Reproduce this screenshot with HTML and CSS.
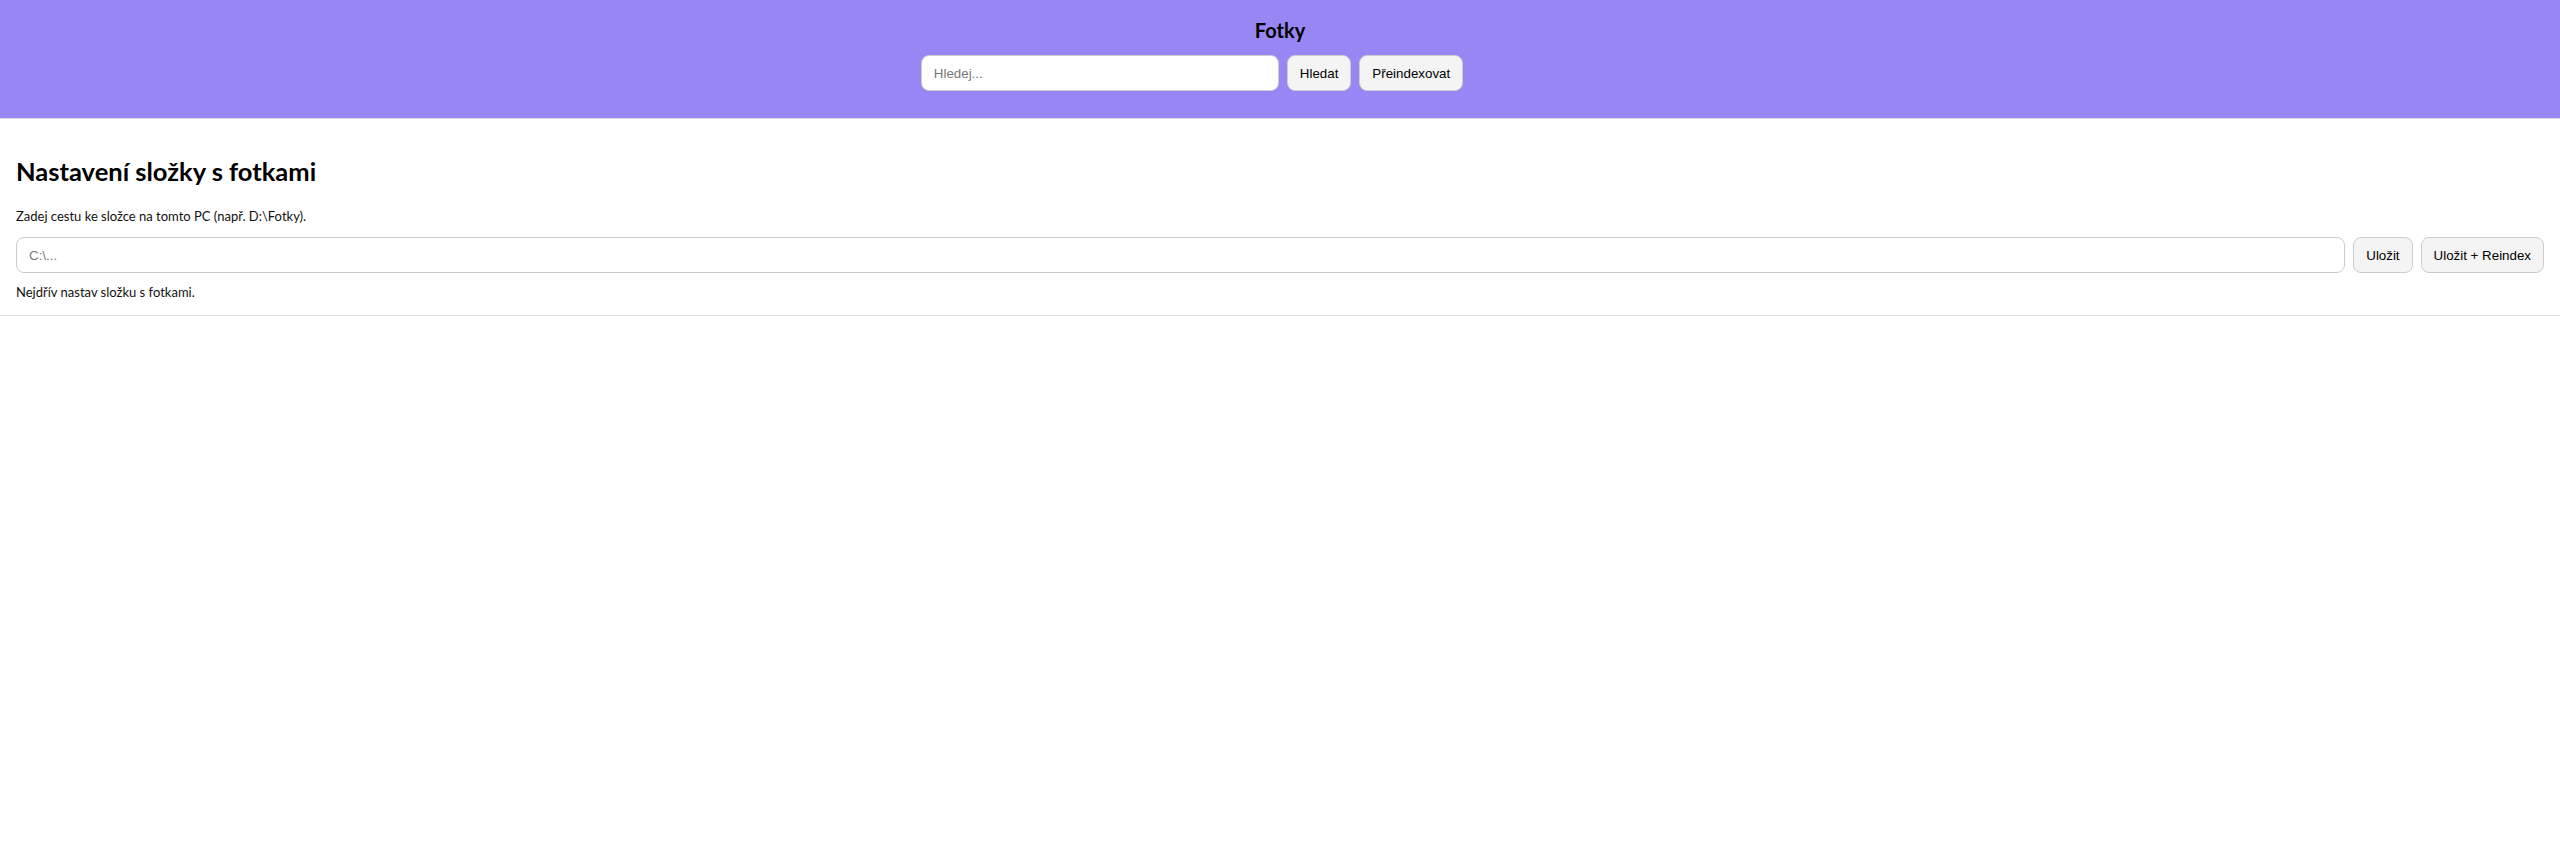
FILE: index.html
```html
<!DOCTYPE html>
<html lang="cs">
<head>
<meta charset="utf-8">
<title>Fotky</title>
<link rel="stylesheet" href="styles.css">
</head>
<body>
<header class="topbar">
  <h1 class="title">Fotky</h1>
  <div class="search-row">
    <input class="field search-field" type="text" placeholder="Hledej...">
    <button class="btn">Hledat</button>
    <button class="btn">Přeindexovat</button>
    <span class="status"></span>
  </div>
</header>
<section class="settings">
  <h2 class="settings-title">Nastavení složky s fotkami</h2>
  <p class="hint">Zadej cestu ke složce na tomto PC (např. D:\Fotky).</p>
  <div class="path-row">
    <input class="field path-field" type="text" placeholder="C:\...">
    <button class="btn">Uložit</button>
    <button class="btn">Uložit + Reindex</button>
  </div>
  <p class="message">Nejdřív nastav složku s fotkami.</p>
</section>
</body>
</html>
```
FILE: styles.css
```css
html, body {
  margin: 0;
  padding: 0;
  background: #ffffff;
}
body {
  font-family: "Lato", "Open Sans", sans-serif;
  color: #111;
}
.topbar {
  background: #9886f4;
  border-bottom: 1px solid #dddddd;
  padding: 16px 0 27px;
  text-align: center;
}
.title {
  margin: 0;
  font-size: 20px;
  line-height: 28px;
  font-weight: 700;
  color: #000;
}
.search-row {
  display: flex;
  justify-content: center;
  gap: 8px;
  margin-top: 11px;
}
.field {
  box-sizing: border-box;
  height: 36px;
  border: 1px solid #cccccc;
  border-radius: 8px;
  background: #fff;
  padding: 0 12px;
  font-family: "Liberation Sans", Arial, sans-serif;
  font-size: 13.333px;
  color: #111;
  outline: none;
}
.field::placeholder {
  color: #777;
}
.search-field {
  width: 358px;
}
.btn {
  box-sizing: border-box;
  height: 36px;
  padding: 0 12px;
  border: 1px solid #cccccc;
  border-radius: 8px;
  background: #f4f4f4;
  font-family: "Liberation Sans", Arial, sans-serif;
  font-size: 13.333px;
  color: #000;
}
.status {
  width: 168px;
}
.settings {
  padding: 16px 16px 14px;
  border-bottom: 1px solid #dddddd;
}
.settings-title {
  margin: 20px 0 20px;
  font-size: 25.5px;
  line-height: 32px;
  font-weight: 700;
  color: #000;
}
.hint {
  margin: 0 0 11px;
  font-size: 13px;
  line-height: 19px;
}
.path-row {
  display: flex;
  gap: 8px;
}
.path-field {
  flex: 1;
}
.message {
  margin: 10px 0 0;
  font-size: 13px;
  line-height: 18px;
}
```
